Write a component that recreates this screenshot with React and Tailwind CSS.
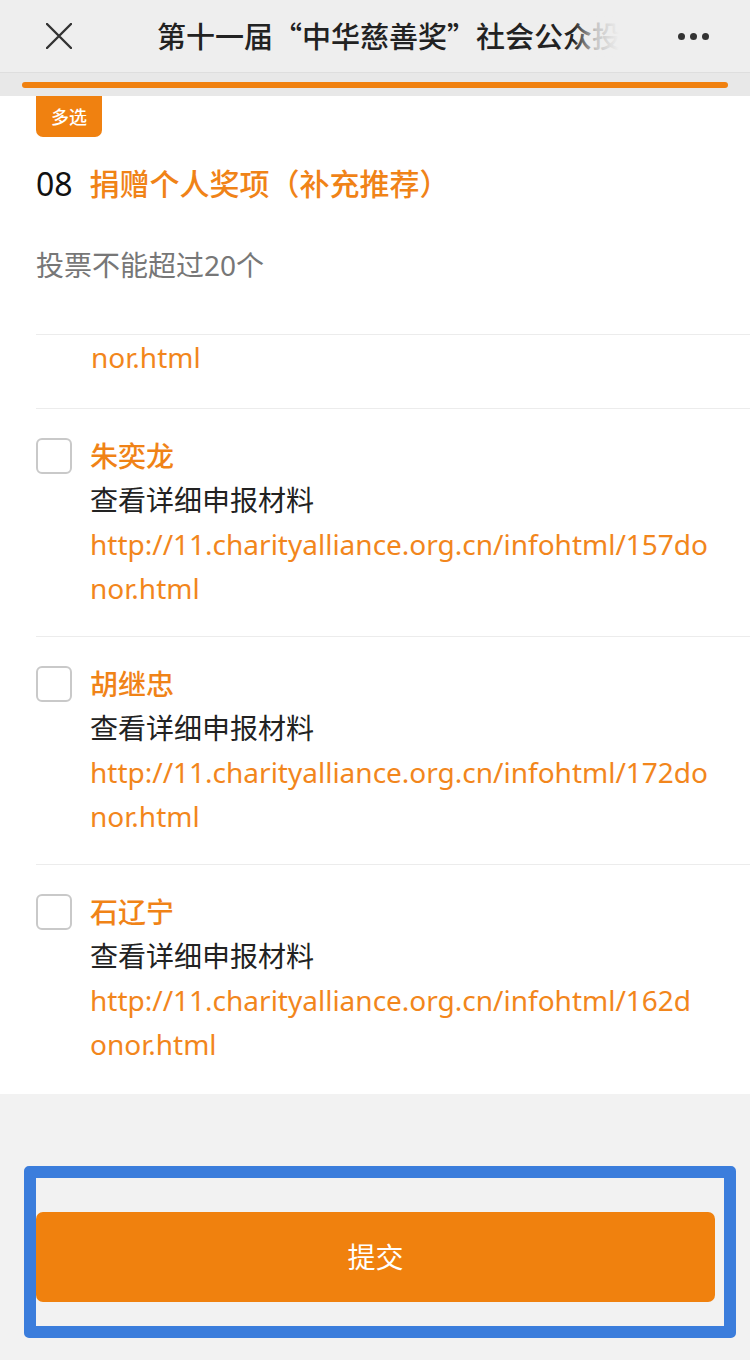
const candidates = [
  { name: '朱奕龙', url1: 'http://11.charityalliance.org.cn/infohtml/157do', url2: 'nor.html' },
  { name: '胡继忠', url1: 'http://11.charityalliance.org.cn/infohtml/172do', url2: 'nor.html' },
  { name: '石辽宁', url1: 'http://11.charityalliance.org.cn/infohtml/162d', url2: 'onor.html' },
];

const font = { fontFamily: '"Noto Sans", "Noto Sans CJK SC", sans-serif' };
const cjk = { fontFamily: '"Noto Sans CJK SC", sans-serif' };

const Candidate = ({ item, last }) => (
  <div className={`flex gap-[18px] pt-[25px] ${last ? 'pb-[28px]' : 'pb-[26px] border-b border-[#ececec]'}`}>
    <div className="mt-[4px] w-[36px] h-[36px] shrink-0 rounded-[6px] border-2 border-[#c9c9c9] bg-white" />
    <div className="text-[28px] leading-[44px]">
      <div className="font-medium text-[#f08317]">{item.name}</div>
      <div className="text-[#222]">查看详细申报材料</div>
      <div className="text-[#f2861c]">{item.url1}</div>
      <div className="text-[#f2861c]">{item.url2}</div>
    </div>
  </div>
);

const App = () => {
  return (
    <div className="w-[750px] h-[1360px] bg-[#f2f2f2] flex flex-col overflow-hidden" style={font}>
      {/* top bar */}
      <div className="h-[73px] bg-[#eeeeee] flex items-center shrink-0 border-b border-[#dedede]">
        <svg className="ml-[46px] shrink-0" width="26" height="26" viewBox="0 0 26 26">
          <path d="M1 1L25 25M25 1L1 25" stroke="#333" strokeWidth="2.4" strokeLinecap="round" />
        </svg>
        <div
          className="relative ml-[85px] w-[462px] overflow-hidden whitespace-nowrap text-[29px] font-medium text-[#222]"
          style={cjk}
        >
          第十一届“中华慈善奖”社会公众投票
          <div className="absolute inset-y-0 right-0 w-[46px] bg-gradient-to-r from-transparent via-[#eeeeee]/80 to-[#eeeeee]" />
        </div>
        <div className="ml-auto mr-[41px] flex gap-[5px]">
          <span className="w-[7px] h-[7px] rounded-full bg-[#333]" />
          <span className="w-[7px] h-[7px] rounded-full bg-[#333]" />
          <span className="w-[7px] h-[7px] rounded-full bg-[#333]" />
        </div>
      </div>
      <div className="h-[23px] bg-[#e8e8e8] pt-[9px] px-[22px] shrink-0">
        <div className="h-[6px] rounded-full bg-[#f08110]" />
      </div>

      {/* content */}
      <div className="bg-white pl-[36px]">
        <div className="border-b border-[#ececec] pb-[47px]">
          <div className="w-[66px] h-[41px] bg-[#f08110] rounded-b-[7px] flex items-center justify-center text-white text-[18px] font-medium" style={cjk}>
            多选
          </div>
          <div className="mt-[25px] flex items-center gap-[17px] leading-[44px]">
            <span className="text-[32px] text-[#111]">08</span>
            <span className="text-[30px] font-medium text-[#f08317]">捐赠个人奖项（补充推荐）</span>
          </div>
          <div className="mt-[37px] text-[28px] leading-[44px] text-[#777]">投票不能超过20个</div>
        </div>
        <div className="border-b border-[#ececec] pl-[55px] pb-[29px] text-[28px] leading-[44px] text-[#f2861c]">
          nor.html
        </div>
        {candidates.map((c, i) => (
          <Candidate key={c.name} item={c} last={i === candidates.length - 1} />
        ))}
      </div>

      {/* submit */}
      <div className="mt-[72px] ml-[24px] w-[712px] border-[12px] border-[#3b7ddc] rounded-[5px] pt-[34px] pb-[24px] pr-[9px]">
        <button className="w-full h-[90px] rounded-[7px] bg-[#f0810e] text-white text-[28px]">提交</button>
      </div>
    </div>
  );
};

export default App;
